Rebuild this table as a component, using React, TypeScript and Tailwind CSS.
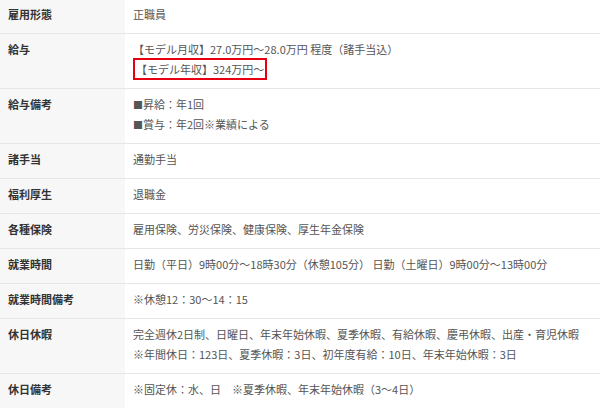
import React from "react";

type Row = {
  label: string;
  lines: React.ReactNode[];
};

const rows: Row[] = [
  { label: "雇用形態", lines: ["正職員"] },
  {
    label: "給与",
    lines: [
      "【モデル月収】27.0万円～28.0万円 程度（諸手当込）",
      <span className="border-2 border-[#e60012] px-px py-px">【モデル年収】324万円～</span>,
    ],
  },
  {
    label: "給与備考",
    lines: [
      <>
        <span className="text-[10px]">■</span>昇給：年1回
      </>,
      <>
        <span className="text-[10px]">■</span>賞与：年2回※業績による
      </>,
    ],
  },
  { label: "諸手当", lines: ["通勤手当"] },
  { label: "福利厚生", lines: ["退職金"] },
  { label: "各種保険", lines: ["雇用保険、労災保険、健康保険、厚生年金保険"] },
  {
    label: "就業時間",
    lines: ["日勤（平日）9時00分～18時30分（休憩105分） 日勤（土曜日）9時00分～13時00分"],
  },
  { label: "就業時間備考", lines: ["※休憩12：30～14：15"] },
  {
    label: "休日休暇",
    lines: [
      "完全週休2日制、日曜日、年末年始休暇、夏季休暇、有給休暇、慶弔休暇、出産・育児休暇",
      "※年間休日：123日、夏季休暇：3日、初年度有給：10日、年末年始休暇：3日",
    ],
  },
  { label: "休日備考", lines: ["※固定休：水、日　※夏季休暇、年末年始休暇（3～4日）"] },
];

export default function App() {
  return (
    <div
      className="w-[600px] h-[408px] overflow-hidden bg-white text-[11px] leading-[20px]"
      style={{ fontFamily: '"Noto Sans CJK JP", "Noto Sans", sans-serif' }}
    >
      <div className="-mt-px">
        {rows.map((row) => (
          <div key={row.label} className="flex border-b border-[#e6e6e6]">
            <div className="w-[125px] shrink-0 bg-[#f7f7f7] px-2 pt-[5px] pb-[9px] font-bold text-[#333]">
              <div className="h-[20px]">{row.label}</div>
            </div>
            <div className="flex-1 px-2 pt-[5px] pb-[9px] text-[#555]">
              {row.lines.map((line, i) => (
                <div key={i} className="h-[20px] whitespace-nowrap">
                  {line}
                </div>
              ))}
            </div>
          </div>
        ))}
      </div>
    </div>
  );
}
